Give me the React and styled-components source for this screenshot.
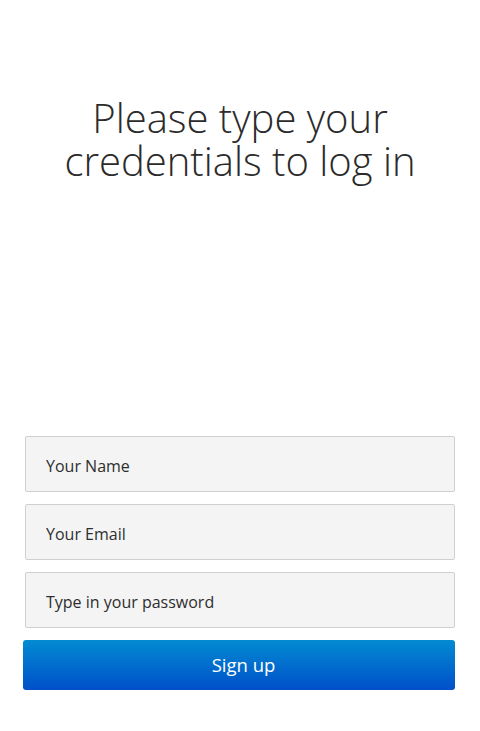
import styled, { createGlobalStyle } from 'styled-components'

const Global = createGlobalStyle`
  html, body { margin: 0; padding: 0; background: #fff; }
  body { font-family: "Open Sans", "Liberation Sans", sans-serif; }
`

const Page = styled.div`
  min-height: 731px;
  display: flex;
  flex-direction: column;
  justify-content: space-between;
  box-sizing: border-box;
  padding: 96px 25px 41px 23px;
`

const Title = styled.h1`
  margin: 0;
  font-weight: 300;
  font-size: 40px;
  line-height: 43px;
  color: #2b2b2b;
  text-align: center;
  padding-left: 2px;
`

const Form = styled.form`
  display: flex;
  flex-direction: column;
  gap: 12px;
`

const Field = styled.input`
  box-sizing: border-box;
  height: 56px;
  margin-left: 2px;
  width: calc(100% - 2px);
  padding: 4px 20px 0;
  border: 1px solid #d0d0d0;
  border-radius: 2px;
  background: #f4f4f4;
  font-family: inherit;
  font-size: 16px;
  color: #333;
  outline: none;
  &::placeholder { color: #2e2e2e; opacity: 1; }
`

const Button = styled.button`
  height: 50px;
  padding: 0 0 2px 9px;
  border: none;
  border-radius: 3px;
  background: linear-gradient(to bottom, #038bd2, #0050c9);
  color: #fff;
  font-family: inherit;
  font-size: 18.5px;
  cursor: pointer;
`

export default function App() {
  return (
    <Page>
      <Global />
      <Title>Please type your<br />credentials to log in</Title>
      <Form onSubmit={e => e.preventDefault()}>
        <Field type="text" placeholder="Your Name" />
        <Field type="email" placeholder="Your Email" />
        <Field type="password" placeholder="Type in your password" />
        <Button type="submit">Sign up</Button>
      </Form>
    </Page>
  )
}
